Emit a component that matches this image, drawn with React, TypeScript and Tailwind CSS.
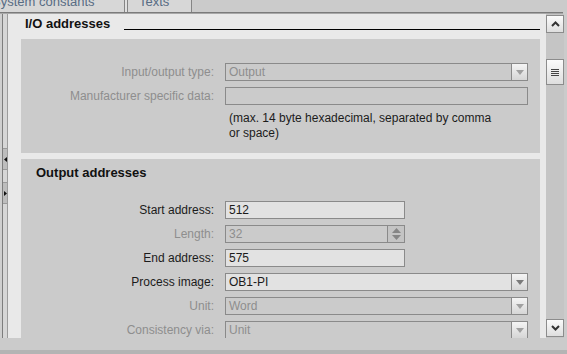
import React from "react";

const TriDown = ({ color = "#7a7a7a" }: { color?: string }) => (
  <svg width="8" height="5" viewBox="0 0 8 5">
    <polygon points="0,0 8,0 4,5" fill={color} />
  </svg>
);

function Label({ text, disabled }: { text: string; disabled?: boolean }) {
  return (
    <div
      className={`w-[194px] shrink-0 text-right pr-[1px] ${
        disabled ? "text-[#8e8e8e]" : "text-[#1b1b1b]"
      }`}
    >
      {text}
    </div>
  );
}

function TextBox({ value, disabled }: { value: string; disabled?: boolean }) {
  return (
    <div
      className={`ml-[10px] w-[180px] h-[18px] border border-[#8a8a8a] pl-[3px] leading-[16px] ${
        disabled ? "bg-[#cbcbcb] text-[#8e8e8e]" : "bg-[#e2e2e2] text-[#1b1b1b]"
      }`}
    >
      {value}
    </div>
  );
}

function SpinBox({ value }: { value: string }) {
  return (
    <div className="ml-[10px] w-[180px] h-[18px] border border-[#8a8a8a] bg-[#cbcbcb] text-[#8e8e8e] flex">
      <div className="flex-1 pl-[3px] leading-[16px]">{value}</div>
      <div className="w-[17px] border-l border-[#8a8a8a] bg-[#c4c4c4] flex flex-col items-center justify-center gap-[2px]">
        <svg width="9" height="5" viewBox="0 0 9 5">
          <polygon points="0,5 9,5 4.5,0" fill="#858585" />
        </svg>
        <svg width="9" height="5" viewBox="0 0 9 5">
          <polygon points="0,0 9,0 4.5,5" fill="#858585" />
        </svg>
      </div>
    </div>
  );
}

function Combo({ value, disabled }: { value: string; disabled?: boolean }) {
  return (
    <div
      className={`ml-[10px] w-[303px] h-[18px] border border-[#8a8a8a] flex ${
        disabled ? "bg-[#cbcbcb] text-[#8e8e8e]" : "bg-[#e2e2e2] text-[#1b1b1b]"
      }`}
    >
      <div className="flex-1 pl-[3px] leading-[16px]">{value}</div>
      <div className="w-[16px] border-l border-[#8a8a8a] bg-gradient-to-b from-[#f4f4f4] to-[#d6d6d6] flex items-center justify-center">
        <TriDown color={disabled ? "#a0a0a0" : "#7a7a7a"} />
      </div>
    </div>
  );
}

function ScrollBtn({ children }: { children: React.ReactNode }) {
  return (
    <div className="h-[18px] w-[18px] border border-[#8c8c8c] bg-gradient-to-b from-[#fbfbfb] to-[#dedede] flex items-center justify-center">
      {children}
    </div>
  );
}

export default function App() {
  return (
    <div className="w-[567px] h-[354px] overflow-hidden bg-[#cbcbcb] flex flex-col font-['Liberation_Sans',Arial,sans-serif] text-[12px]">
      {/* tabs */}
      <div className="h-[12px] flex overflow-hidden text-[13px] text-[#586c84] leading-[15px]">
        <div className="w-[125px] bg-[#d7d7d7] border-r border-[#858585] overflow-hidden">
          <div className="-mt-[6px] -ml-[8px] whitespace-nowrap">System constants</div>
        </div>
        <div className="w-[2px] bg-[#e0e0e0]" />
        <div className="w-[65px] bg-[#d7d7d7] border-x border-[#858585] overflow-hidden">
          <div className="-mt-[6px] pl-[11px]">Texts</div>
        </div>
        <div className="flex-1" />
      </div>
      <div className="h-px bg-[#7b7b7b] mr-[4px]" />
      <div className="h-px bg-[#a8a8a8] mr-[4px]" />

      {/* main area */}
      <div className="h-[324px] flex">
        {/* left gutter */}
        <div className="w-[8px] flex">
          <div className="w-[2px] bg-[#cfcfcf]" />
          <div className="w-[6px] border-l border-r border-l-[#7d7d7d] border-r-[#9c9c9c] bg-[#d6d6d6] flex flex-col">
            <div className="h-[134px]" />
            <div className="h-[22px] bg-[#bdbdbd] border-y border-[#9a9a9a] flex items-center">
              <svg width="3" height="5" viewBox="0 0 3 5" className="ml-[1px]">
                <polygon points="3,0 3,5 0,2.5" fill="#111" />
              </svg>
            </div>
            <div className="h-[12px]" />
            <div className="h-[22px] bg-[#bdbdbd] border-y border-[#9a9a9a] flex items-center">
              <svg width="3" height="5" viewBox="0 0 3 5" className="ml-[1px]">
                <polygon points="0,0 0,5 3,2.5" fill="#111" />
              </svg>
            </div>
          </div>
        </div>

        {/* content */}
        <div className="w-[538px] bg-[#e9e9e9] pl-[13px] pr-[6px] overflow-hidden">
          <div className="h-[25px] flex">
            <div className="w-[103px] pl-[4px] pt-[2px] font-bold text-[13px] leading-[15px] text-[#111]">
              I/O addresses
            </div>
            <div className="flex-1 h-px bg-black mt-[15px]" />
          </div>

          <div className="h-[114px] bg-[#cbcbcb] pt-[24px] flex flex-col gap-[6px]">
            <div className="flex items-center h-[18px]">
              <Label text="Input/output type:" disabled />
              <Combo value="Output" disabled />
            </div>
            <div className="flex items-center h-[18px]">
              <Label text="Manufacturer specific data:" disabled />
              <div className="ml-[10px] w-[303px] h-[18px] border border-[#8a8a8a] bg-[#cbcbcb]" />
            </div>
            <div className="pl-[208px] leading-[15px] text-[#1b1b1b]">
              (max. 14 byte hexadecimal, separated by comma
              <br />
              or space)
            </div>
          </div>

          <div className="h-[6px]" />

          <div className="h-[200px] bg-[#cbcbcb] pt-[6px]">
            <div className="pl-[15px] font-bold text-[13px] leading-[15px] text-[#111]">
              Output addresses
            </div>
            <div className="mt-[21px] flex flex-col gap-[6px]">
              <div className="flex items-center h-[18px]">
                <Label text="Start address:" />
                <TextBox value="512" />
              </div>
              <div className="flex items-center h-[18px]">
                <Label text="Length:" disabled />
                <SpinBox value="32" />
              </div>
              <div className="flex items-center h-[18px]">
                <Label text="End address:" />
                <TextBox value="575" />
              </div>
              <div className="flex items-center h-[18px]">
                <Label text="Process image:" />
                <Combo value="OB1-PI" />
              </div>
              <div className="flex items-center h-[18px]">
                <Label text="Unit:" disabled />
                <Combo value="Word" disabled />
              </div>
              <div className="flex items-center h-[18px]">
                <Label text="Consistency via:" disabled />
                <Combo value="Unit" disabled />
              </div>
            </div>
          </div>
        </div>

        {/* scrollbar */}
        <div className="w-[18px] bg-[#c5c5c5] flex flex-col pt-[1px] pb-px">
          <ScrollBtn>
            <svg width="9" height="6" viewBox="0 0 9 6">
              <path d="M1 5 L4.5 1.5 L8 5" stroke="#333" strokeWidth="2" fill="none" />
            </svg>
          </ScrollBtn>
          <div className="h-[26px]" />
          <div className="h-[26px] w-[18px] border border-[#8c8c8c] bg-gradient-to-b from-[#fbfbfb] to-[#dedede] flex flex-col items-center justify-center gap-px">
            <div className="w-[8px] h-px bg-[#444]" />
            <div className="w-[8px] h-px bg-[#444]" />
            <div className="w-[8px] h-px bg-[#444]" />
            <div className="w-[8px] h-px bg-[#444]" />
          </div>
          <div className="flex-1" />
          <ScrollBtn>
            <svg width="9" height="6" viewBox="0 0 9 6">
              <path d="M1 1 L4.5 4.5 L8 1" stroke="#333" strokeWidth="2" fill="none" />
            </svg>
          </ScrollBtn>
        </div>
        <div className="flex-1" />
      </div>

      {/* bottom */}
      <div className="h-[12px]" />
      <div className="h-[4px] bg-[#b4b4b4]" />
    </div>
  );
}
